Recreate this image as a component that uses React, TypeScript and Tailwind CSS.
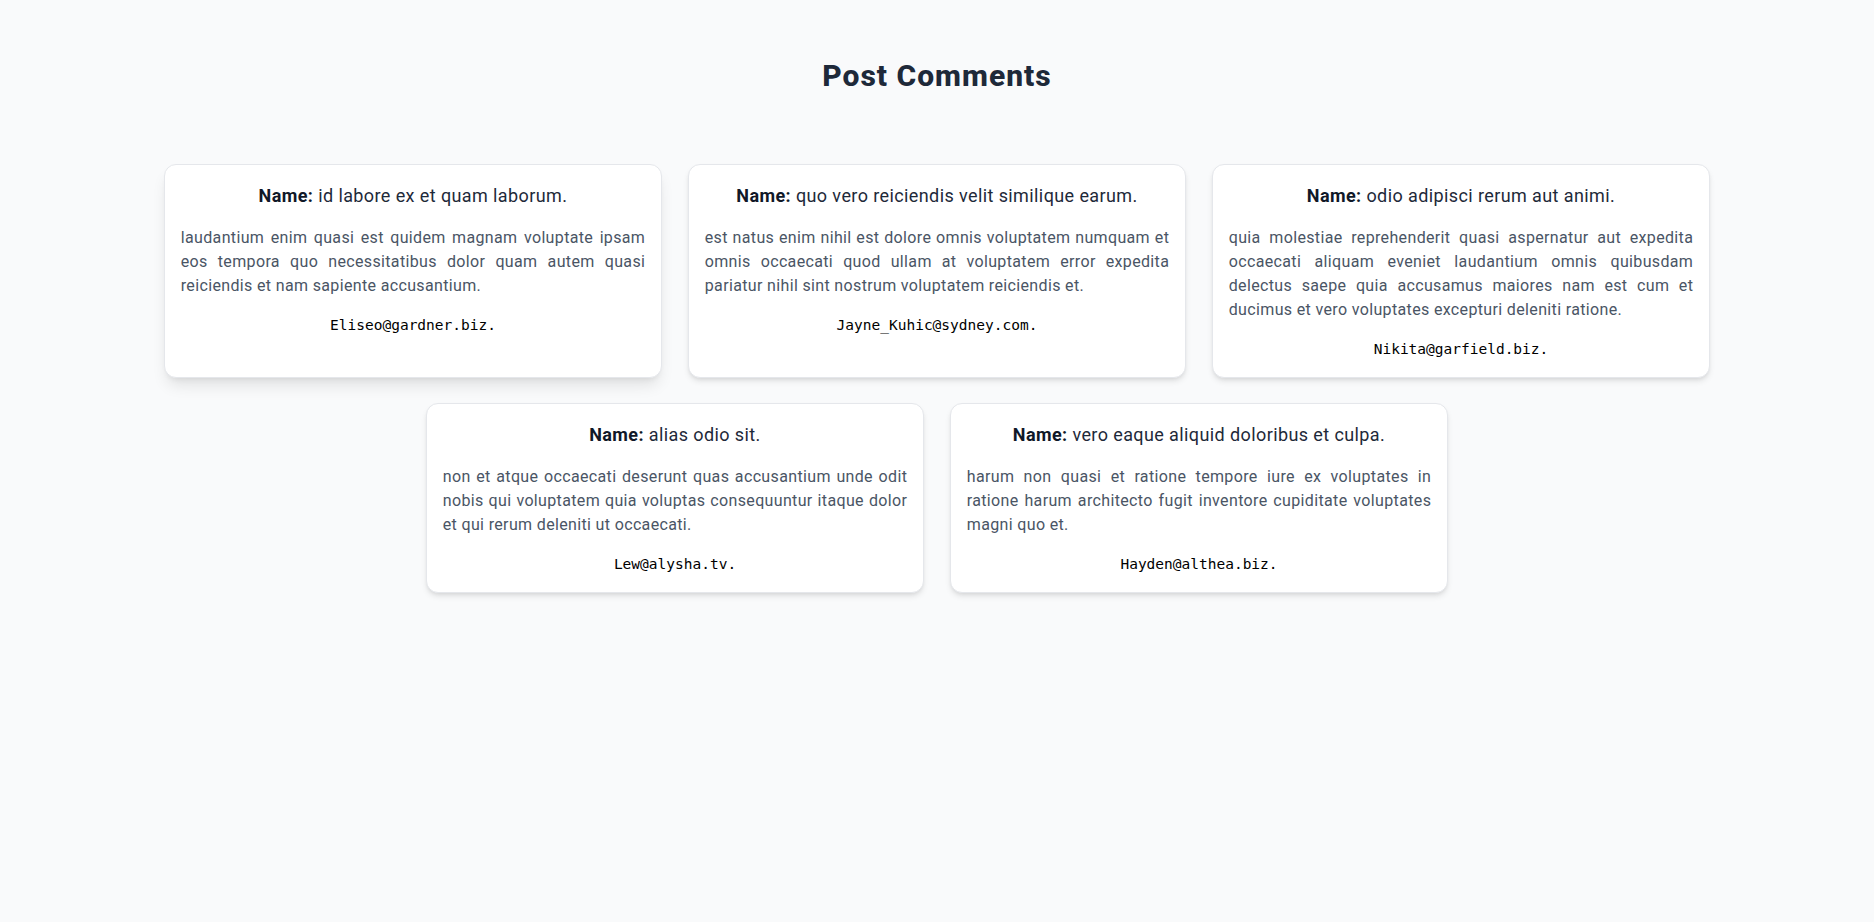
type Comment = {
  name: string;
  body: string;
  email: string;
};

const comments: Comment[] = [
  {
    name: "id labore ex et quam laborum.",
    body: "laudantium enim quasi est quidem magnam voluptate ipsam eos tempora quo necessitatibus dolor quam autem quasi reiciendis et nam sapiente accusantium.",
    email: "Eliseo@gardner.biz.",
  },
  {
    name: "quo vero reiciendis velit similique earum.",
    body: "est natus enim nihil est dolore omnis voluptatem numquam et omnis occaecati quod ullam at voluptatem error expedita pariatur nihil sint nostrum voluptatem reiciendis et.",
    email: "Jayne_Kuhic@sydney.com.",
  },
  {
    name: "odio adipisci rerum aut animi.",
    body: "quia molestiae reprehenderit quasi aspernatur aut expedita occaecati aliquam eveniet laudantium omnis quibusdam delectus saepe quia accusamus maiores nam est cum et ducimus et vero voluptates excepturi deleniti ratione.",
    email: "Nikita@garfield.biz.",
  },
  {
    name: "alias odio sit.",
    body: "non et atque occaecati deserunt quas accusantium unde odit nobis qui voluptatem quia voluptas consequuntur itaque dolor et qui rerum deleniti ut occaecati.",
    email: "Lew@alysha.tv.",
  },
  {
    name: "vero eaque aliquid doloribus et culpa.",
    body: "harum non quasi et ratione tempore iure ex voluptates in ratione harum architecto fugit inventore cupiditate voluptates magni quo et.",
    email: "Hayden@althea.biz.",
  },
];

function CommentCard({ comment, raised }: { comment: Comment; raised?: boolean }) {
  return (
    <div
      className={`w-[498.5px] bg-white border border-gray-200 rounded-xl px-4 pt-[17px] pb-4 ${
        raised ? "shadow-lg" : "shadow-md"
      }`}
    >
      <h2 className="text-lg leading-7 tracking-[0.4px] text-gray-800 text-center">
        <span className="font-bold text-gray-900">Name:</span> {comment.name}
      </h2>
      <p className="mt-4 text-base leading-6 tracking-[0.35px] text-gray-600 text-justify">
        {comment.body}
      </p>
      <p className="mt-[15px] text-[14.5px] leading-6 text-black text-center font-['DejaVu_Sans_Mono',monospace]">
        {comment.email}
      </p>
    </div>
  );
}

export default function App() {
  return (
    <div className="min-h-screen bg-gray-50 pt-[58px] font-['Roboto','Noto_Sans',sans-serif]">
      <h1 className="text-3xl leading-9 font-extrabold tracking-[1px] text-gray-800 text-center">
        Post Comments
      </h1>

      {/* カード一覧：3列で折り返し、最終行は中央寄せ */}
      <div className="mt-[70px] flex flex-wrap justify-center gap-x-[25.5px] gap-y-[25px]">
        {comments.map((c, i) => (
          <CommentCard key={c.email} comment={c} raised={i === 0} />
        ))}
      </div>
    </div>
  );
}
